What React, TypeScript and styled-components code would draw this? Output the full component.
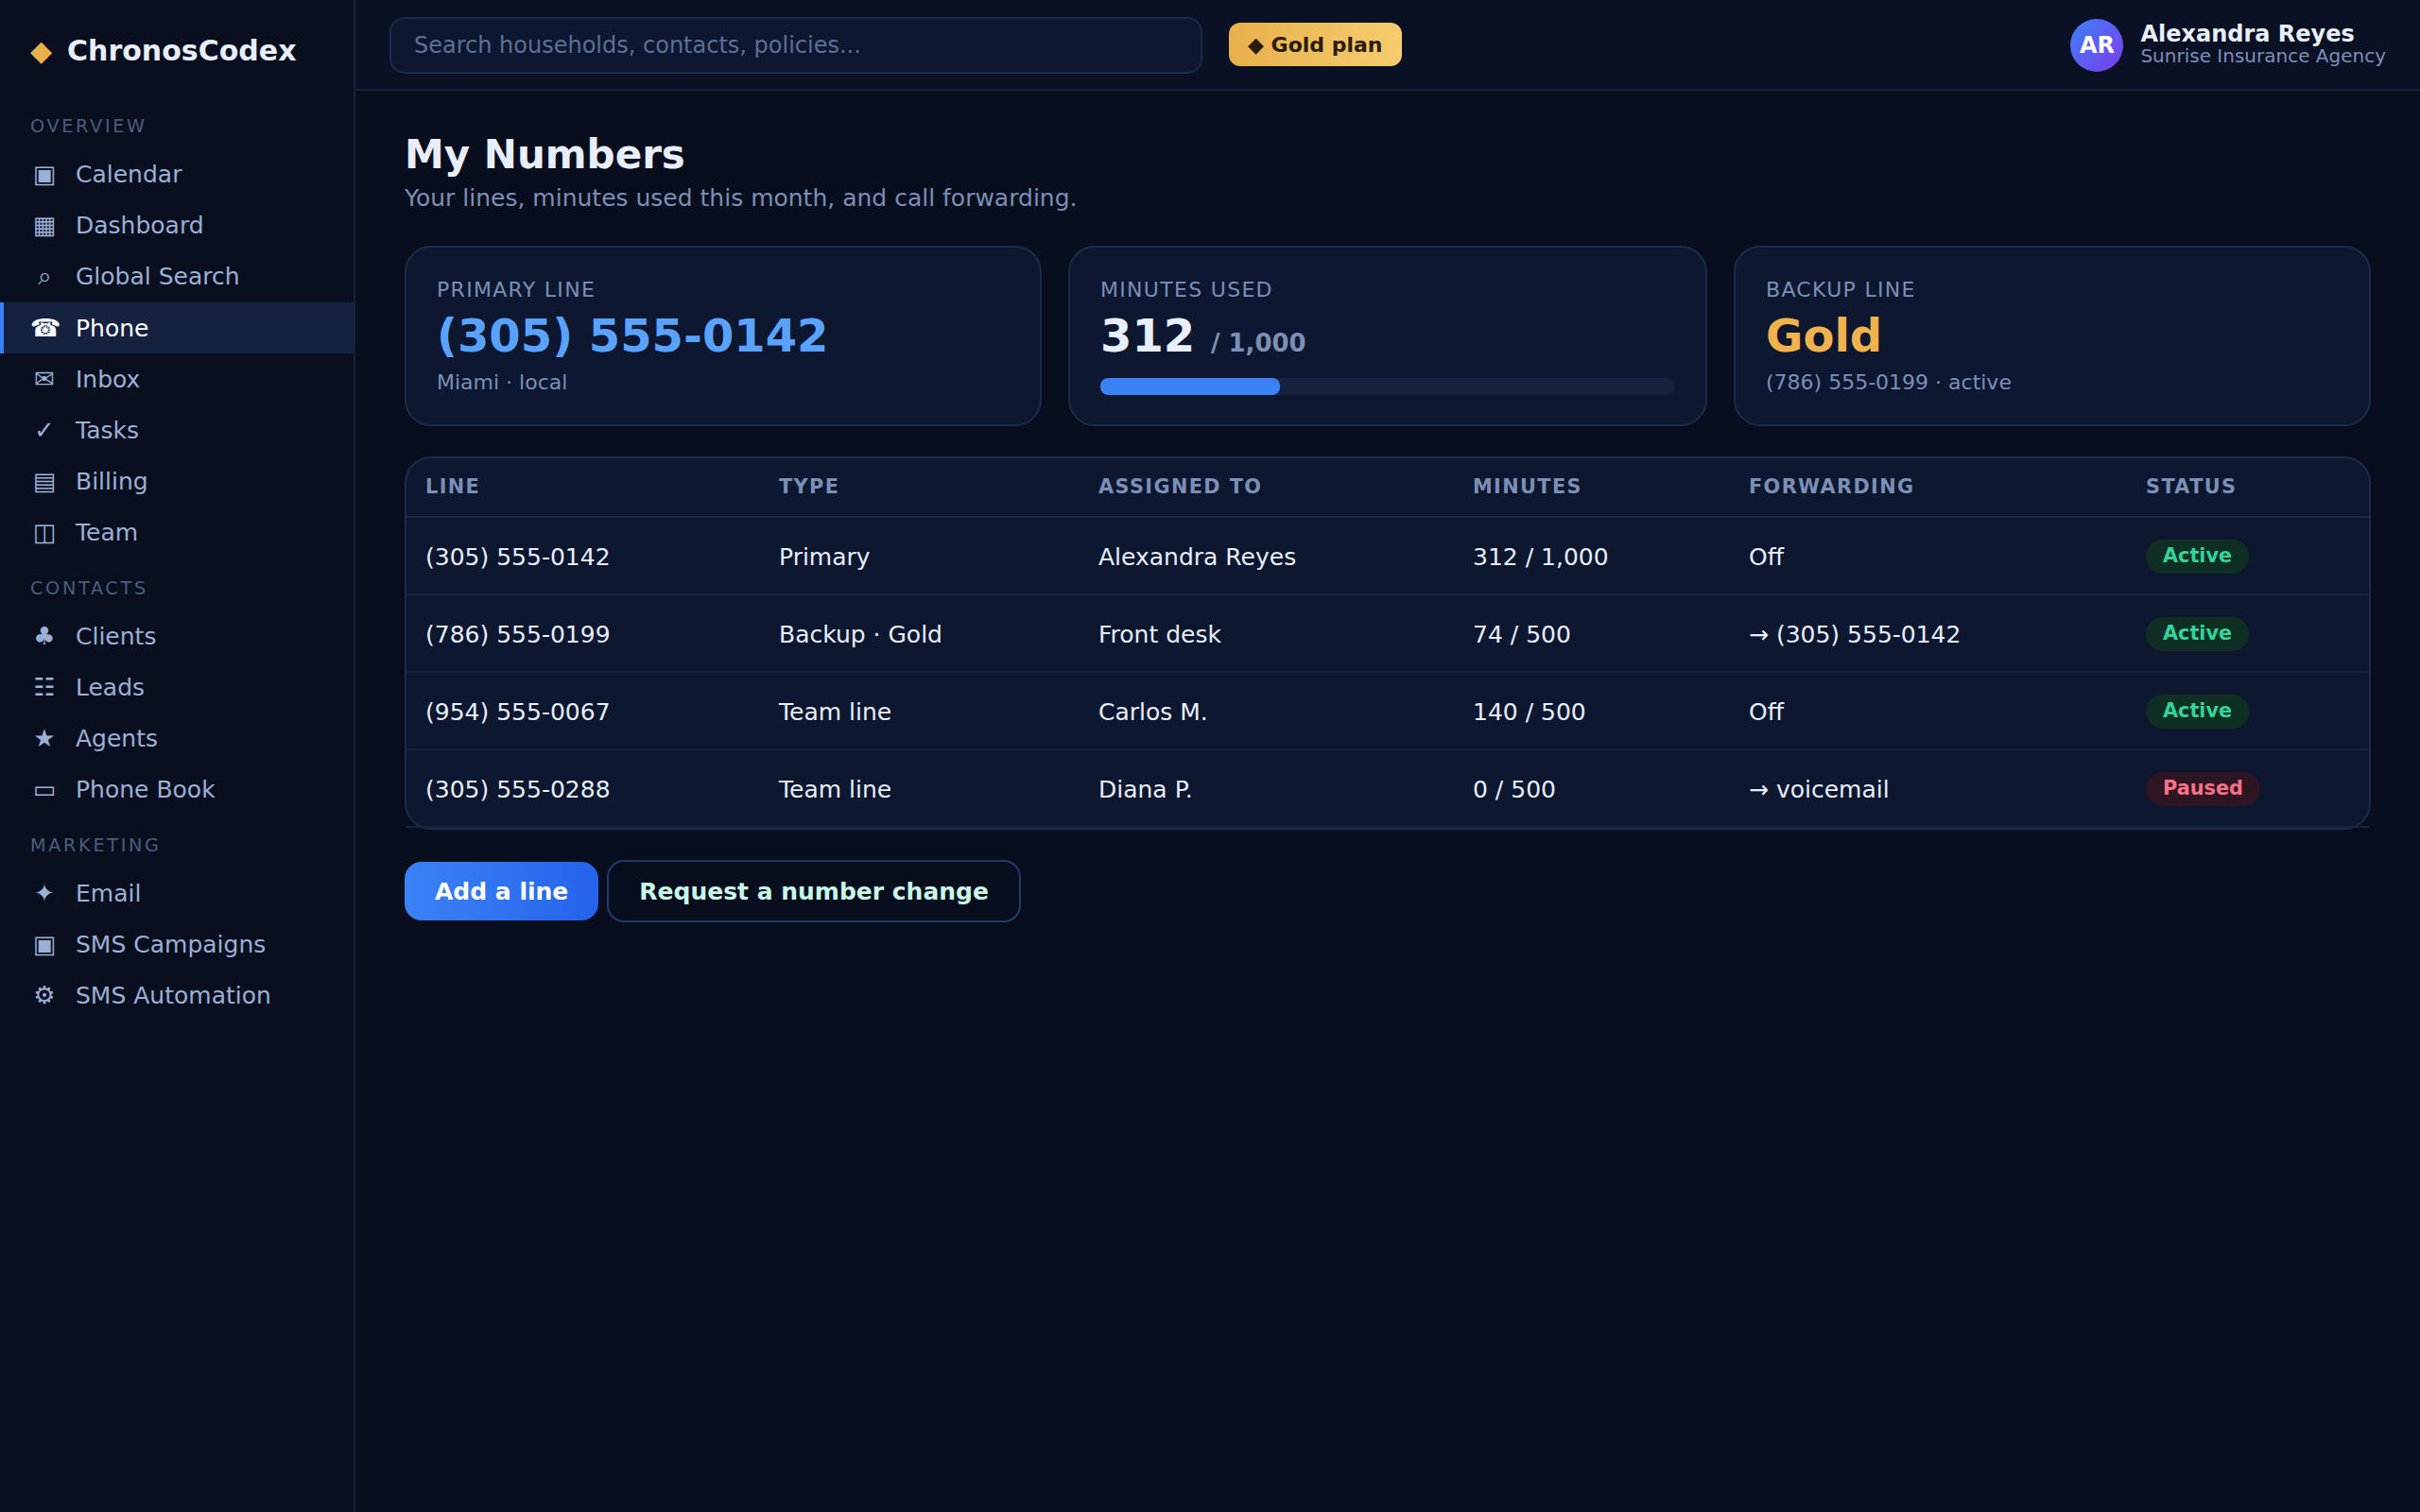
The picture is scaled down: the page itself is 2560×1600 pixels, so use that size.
import styled, { createGlobalStyle } from 'styled-components';

const GlobalStyle = createGlobalStyle`
  * {
    box-sizing: border-box;
  }
  html,
  body {
    margin: 0;
    padding: 0;
    background: #080e1d;
    font-family: 'DejaVu Sans', sans-serif;
    color: #e8eefc;
  }
`;

const navGroups = [
  {
    title: 'OVERVIEW',
    items: [
      { icon: '▣', label: 'Calendar' },
      { icon: '▦', label: 'Dashboard' },
      { icon: '⌕', label: 'Global Search' },
      { icon: '☎', label: 'Phone', active: true },
      { icon: '✉', label: 'Inbox' },
      { icon: '✓', label: 'Tasks' },
      { icon: '▤', label: 'Billing' },
      { icon: '◫', label: 'Team' },
    ],
  },
  {
    title: 'CONTACTS',
    items: [
      { icon: '♣', label: 'Clients' },
      { icon: '☷', label: 'Leads' },
      { icon: '★', label: 'Agents' },
      { icon: '▭', label: 'Phone Book' },
    ],
  },
  {
    title: 'MARKETING',
    items: [
      { icon: '✦', label: 'Email' },
      { icon: '▣', label: 'SMS Campaigns' },
      { icon: '⚙', label: 'SMS Automation' },
    ],
  },
];

const columns = [
  { title: 'LINE', width: 374 },
  { title: 'TYPE', width: 338 },
  { title: 'ASSIGNED TO', width: 396 },
  { title: 'MINUTES', width: 292 },
  { title: 'FORWARDING', width: 420 },
  { title: 'STATUS', width: 256 },
];

const lines = [
  ['(305) 555-0142', 'Primary', 'Alexandra Reyes', '312 / 1,000', 'Off', 'Active'],
  ['(786) 555-0199', 'Backup · Gold', 'Front desk', '74 / 500', '→ (305) 555-0142', 'Active'],
  ['(954) 555-0067', 'Team line', 'Carlos M.', '140 / 500', 'Off', 'Active'],
  ['(305) 555-0288', 'Team line', 'Diana P.', '0 / 500', '→ voicemail', 'Paused'],
];

export default function App() {
  return (
    <Shell>
      <GlobalStyle />
      <Sidebar>
        <Brand>
          <BrandMark>◆</BrandMark>
          ChronosCodex
        </Brand>
        {navGroups.map((group) => (
          <NavGroup key={group.title}>
            <GroupTitle>{group.title}</GroupTitle>
            {group.items.map((item) => (
              <NavItem key={item.label} $active={item.active}>
                <NavIcon>{item.icon}</NavIcon>
                {item.label}
              </NavItem>
            ))}
          </NavGroup>
        ))}
      </Sidebar>
      <Main>
        <Topbar>
          <SearchInput placeholder="Search households, contacts, policies..." />
          <PlanBadge>◆ Gold plan</PlanBadge>
          <UserBox>
            <Avatar>AR</Avatar>
            <UserText>
              <UserName>Alexandra Reyes</UserName>
              <UserAgency>Sunrise Insurance Agency</UserAgency>
            </UserText>
          </UserBox>
        </Topbar>
        <Content>
          <Title>My Numbers</Title>
          <Subtitle>Your lines, minutes used this month, and call forwarding.</Subtitle>
          <Cards>
            <Card>
              <CardLabel>PRIMARY LINE</CardLabel>
              <CardValue $color="#5aa2ff">(305) 555-0142</CardValue>
              <CardSub>Miami · local</CardSub>
            </Card>
            <Card>
              <CardLabel>MINUTES USED</CardLabel>
              <CardValue>
                312 <CardUnit>/ 1,000</CardUnit>
              </CardValue>
              <Track>
                <Fill style={{ width: `${(312 / 1000) * 100}%` }} />
              </Track>
            </Card>
            <Card>
              <CardLabel>BACKUP LINE</CardLabel>
              <CardValue $color="#f0b24d">Gold</CardValue>
              <CardSub>(786) 555-0199 · active</CardSub>
            </Card>
          </Cards>
          <TableWrap>
            <Table>
              <colgroup>
                {columns.map((col) => (
                  <col key={col.title} width={col.width} />
                ))}
              </colgroup>
              <thead>
                <tr>
                  {columns.map((col) => (
                    <Th key={col.title}>{col.title}</Th>
                  ))}
                </tr>
              </thead>
              <tbody>
                {lines.map((row) => (
                  <tr key={row[0]}>
                    {row.slice(0, 5).map((cell) => (
                      <Td key={cell}>{cell}</Td>
                    ))}
                    <Td>
                      <Status $paused={row[5] === 'Paused'}>{row[5]}</Status>
                    </Td>
                  </tr>
                ))}
              </tbody>
            </Table>
          </TableWrap>
          <Actions>
            <PrimaryButton>Add a line</PrimaryButton>
            <GhostButton>Request a number change</GhostButton>
          </Actions>
        </Content>
      </Main>
    </Shell>
  );
}

const Shell = styled.div`
  display: grid;
  grid-template-columns: 376px 1fr;
  min-height: 100vh;
`;

const Sidebar = styled.aside`
  background: #0a0f20;
  border-right: 2px solid #16213c;
  padding-top: 36px;
`;

const Brand = styled.div`
  display: flex;
  align-items: center;
  gap: 16px;
  padding: 0 32px;
  font-size: 30px;
  font-weight: 700;
  line-height: 36px;
  color: #e8eefc;
`;

const BrandMark = styled.span`
  color: #e8b04b;
  font-size: 30px;
`;

const NavGroup = styled.nav`
  display: flex;
  flex-direction: column;
  margin-top: 21px;
  &:first-of-type {
    margin-top: 50px;
  }
`;

const GroupTitle = styled.div`
  padding: 0 32px;
  margin-bottom: 11px;
  font-size: 19.2px;
  line-height: 24px;
  letter-spacing: 2.7px;
  color: #4d5c7e;
`;

const NavItem = styled.a<{ $active?: boolean }>`
  display: flex;
  align-items: center;
  gap: 18px;
  padding: 12px 28px;
  border-left: 4px solid ${(p) => (p.$active ? '#3b82f6' : 'transparent')};
  background: ${(p) => (p.$active ? '#14213f' : 'transparent')};
  color: ${(p) => (p.$active ? '#ffffff' : '#9bb0d4')};
  font-size: 25px;
`;

const NavIcon = styled.span`
  width: 30px;
  font-size: 26px;
  text-align: center;
  flex-shrink: 0;
`;

const Main = styled.main`
  display: flex;
  flex-direction: column;
  min-width: 0;
`;

const Topbar = styled.header`
  display: flex;
  align-items: center;
  height: 96px;
  padding: 2px 36px 0;
  gap: 28px;
  background: #0a1124;
  border-bottom: 2px solid #16213c;
`;

const SearchInput = styled.input`
  width: 860px;
  height: 60px;
  padding: 0 24px;
  background: #0d1730;
  border: 2px solid #1d2a4a;
  border-radius: 16px;
  font-family: inherit;
  font-size: 24px;
  color: #e8eefc;
  &::placeholder {
    color: #5e6f94;
    opacity: 1;
  }
`;

const PlanBadge = styled.div`
  padding: 8px 20px;
  height: 46px;
  margin-top: -2px;
  display: flex;
  align-items: center;
  border-radius: 12px;
  background: linear-gradient(90deg, #e8b04b, #f5cc6e);
  color: #2a1c05;
  font-size: 22px;
  font-weight: 700;
`;

const UserBox = styled.div`
  display: flex;
  align-items: center;
  gap: 18px;
  margin-left: auto;
`;

const Avatar = styled.div`
  display: flex;
  align-items: center;
  justify-content: center;
  width: 56px;
  height: 56px;
  border-radius: 50%;
  background: linear-gradient(135deg, #3b82f6, #7c3aed);
  color: #fff;
  font-size: 24px;
  font-weight: 700;
`;

const UserText = styled.div`
  display: flex;
  flex-direction: column;
  padding-bottom: 2px;
`;

const UserName = styled.span`
  font-size: 24px;
  font-weight: 700;
  line-height: 24px;
  color: #e8eefc;
`;

const UserAgency = styled.span`
  font-size: 20px;
  line-height: 22px;
  color: #7c8fb5;
`;

const Content = styled.div`
  padding: 43px 52px;
`;

const Title = styled.h1`
  margin: 0;
  font-size: 42px;
  line-height: 50px;
  font-weight: 700;
  color: #e8eefc;
`;

const Subtitle = styled.p`
  margin: 6px 0 0;
  font-size: 25px;
  line-height: 30px;
  color: #7c8fb5;
`;

const Cards = styled.section`
  display: grid;
  grid-template-columns: 674px 676px 674px;
  gap: 28px;
  margin-top: 35px;
`;

const Card = styled.div`
  height: 191px;
  padding: 32px;
  background: #0d1730;
  border: 2px solid #1d2a4a;
  border-radius: 28px;
`;

const CardLabel = styled.div`
  font-size: 22px;
  line-height: 25px;
  letter-spacing: 1.3px;
  color: #7c8fb5;
`;

const CardValue = styled.div<{ $color?: string }>`
  margin-top: 6px;
  font-size: 48px;
  line-height: 60px;
  font-weight: 700;
  color: ${(p) => p.$color || '#e8eefc'};
`;

const CardUnit = styled.span`
  font-size: 26px;
  line-height: 1;
  color: #7c8fb5;
`;

const CardSub = styled.div`
  margin-top: 6px;
  font-size: 22px;
  line-height: 28px;
  color: #7c8fb5;
`;

const Track = styled.div`
  height: 18px;
  margin-top: 15px;
  border-radius: 8px;
  background: #17223f;
  overflow: hidden;
`;

const Fill = styled.div`
  height: 100%;
  border-radius: 8px;
  background: #3b82f6;
`;

const TableWrap = styled.div`
  margin-top: 32px;
  background: #0d1730;
  border: 2px solid #1d2a4a;
  border-radius: 28px;
`;

const Table = styled.table`
  width: 100%;
  table-layout: fixed;
  border-collapse: collapse;
`;

const Th = styled.th`
  height: 62px;
  padding: 0 20px 2px;
  text-align: left;
  font-size: 20.8px;
  font-weight: 700;
  letter-spacing: 1.4px;
  color: #7c8fb5;
  border-bottom: 2px solid #1d2a4a;
`;

const Td = styled.td`
  height: 82px;
  padding: 2px 20px 0;
  font-size: 25px;
  color: #e8eefc;
  border-bottom: 2px solid #16213c;
`;

const Status = styled.span<{ $paused?: boolean }>`
  display: inline-block;
  padding: 3px 18px 5px;
  border-radius: 18px;
  font-size: 20.8px;
  line-height: 28px;
  font-weight: 700;
  vertical-align: 4px;
  color: ${(p) => (p.$paused ? '#fb7185' : '#34d399')};
  background: ${(p) => (p.$paused ? '#2e1522' : '#0f2f24')};
`;

const Actions = styled.div`
  display: flex;
  align-items: center;
  gap: 9px;
  margin-top: 32px;
`;

const PrimaryButton = styled.button`
  height: 62px;
  padding: 0 32px;
  border: 0;
  border-radius: 18px;
  background: linear-gradient(90deg, #3b82f6, #2563eb);
  color: #fff;
  font-family: inherit;
  font-size: 25px;
  font-weight: 700;
`;

const GhostButton = styled.button`
  height: 66px;
  padding: 0 32px;
  border: 2px solid #23396a;
  border-radius: 18px;
  background: transparent;
  color: #c8f7e8;
  font-family: inherit;
  font-size: 25px;
  font-weight: 700;
`;
